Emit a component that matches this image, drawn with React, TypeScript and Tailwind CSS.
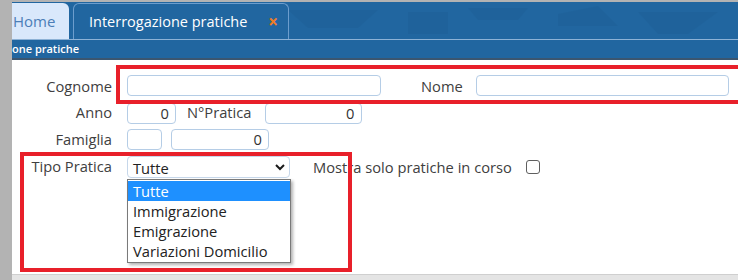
import React from 'react'

const inputCls = 'h-[21px] rounded-[4px] border border-[#b5cde6] bg-white text-right pr-[6px] text-[14.7px] leading-[19px] text-[#333]'

export default function App() {
  const options = ['Tutte', 'Immigrazione', 'Emigrazione', 'Variazioni Domicilio']

  return (
    <div className="relative flex h-[280px] w-[738px] overflow-hidden bg-[#b3b3b3] font-['Open_Sans',sans-serif]">
      <div className="w-[12px] shrink-0" />
      <div className="flex flex-1 flex-col pt-[2px]">
        {/* tab strip */}
        <div className="relative flex h-[38px] items-end gap-[4px] border-b border-[#8db2d6] bg-[#2166a0]">
          <svg className="absolute right-0 top-0 opacity-[0.07]" width="460" height="37" viewBox="0 0 460 37">
            <path d="M10 8h90l-20 18H30z M130 10h40v22h-40z M190 6h60l-10 12h-40z M280 12l40-8 20 20h-60z M360 10h80l-30 22h-30z" fill="#0d3a66" />
          </svg>
          <div className="relative flex h-[36px] w-[57px] items-center rounded-tr-[6px] bg-[#d9e8fb] pl-[1px] text-[15px] text-[#4c7eb7]">
            Home
          </div>
          <div className="relative flex h-[36px] w-[216px] items-center justify-between rounded-t-[6px] border border-b-0 border-[#6c9dcd] bg-[#2166a0] pl-[15px] pr-[10px] text-[14.5px] text-white">
            <span>Interrogazione pratiche</span>
            <span className="text-[17px] font-bold text-[#ef7d25]">×</span>
          </div>
        </div>
        {/* subtitle */}
        <div className="flex h-[20px] items-center border-b-2 border-[#3b5670] bg-[#2166a0] text-[11px] font-semibold text-white">
          one pratiche
        </div>

        {/* content */}
        <div className="relative flex-1 bg-white pt-[15px] text-[14.7px] leading-[20px] text-[#404040]">
          <div className="flex h-[21px] items-center">
            <div className="w-[100px] text-right">Cognome</div>
            <div className={inputCls + ' ml-[15px] w-[254px]'} />
            <div className="ml-[40px]">Nome</div>
            <div className={inputCls + ' ml-[13px] w-[253px]'} />
          </div>
          <div className="mt-[7px] flex h-[20px] items-center">
            <div className="-mt-[2px] w-[100px] text-right">Anno</div>
            <div className={inputCls + ' ml-[15px] h-[20px] w-[49px]'}>0</div>
            <div className="-mt-[2px] ml-[11px]">N°Pratica</div>
            <div className={inputCls + ' ml-[13px] h-[20px] w-[97px]'}>0</div>
          </div>
          <div className="mt-[6px] flex h-[20px] items-center">
            <div className="w-[100px] text-right">Famiglia</div>
            <div className={inputCls + ' ml-[15px] h-[20px] w-[35px]'} />
            <div className={inputCls + ' ml-[9px] h-[20px] w-[98px]'}>0</div>
          </div>
          <div className="mt-[7px] flex h-[22px] items-start">
            <div className="w-[100px] text-right">Tipo Pratica</div>
            <div className="ml-[15px] flex h-[22px] w-[163px] items-center justify-between rounded-[4px] border border-[#c6d7ea] pl-[5px] pr-[3px] text-[#222]">
              <span className="mt-[2px]">Tutte</span>
              <svg width="12" height="12" viewBox="0 0 12 12">
                <path d="M2 4l4 4 4-4" fill="none" stroke="#1a1a1a" strokeWidth="2" />
              </svg>
            </div>
            <div className="ml-[23px] mt-[1px]">Mostra solo pratiche in corso</div>
            <div className="ml-[14px] mt-[4px] h-[14px] w-[14px] rounded-[3px] border border-[#5f5f5f]" />
          </div>

          {/* open select list */}
          <div className="absolute left-[115px] top-[119px] w-[164px] border border-[#7a7a7a] bg-white py-[1px] shadow-[2px_2px_3px_rgba(0,0,0,0.3)]">
            {options.map((o, i) => (
              <div
                key={o}
                className={
                  'h-[20px] pl-[5px] leading-[20px] ' +
                  (i === 0 ? 'bg-[#1e90ff] text-white' : 'text-[#222]')
                }
              >
                {o}
              </div>
            ))}
          </div>
        </div>
        <div className="h-[6px] border-t border-[#cfcfcf] bg-[#e4e4e4]" />
      </div>

      {/* red annotation boxes */}
      <div className="absolute left-[116px] top-[65px] h-[39px] w-[630px] border-4 border-[#e8202a]" />
      <div className="absolute left-[20px] top-[152px] h-[120px] w-[332px] border-4 border-[#e8202a]" />
    </div>
  )
}
